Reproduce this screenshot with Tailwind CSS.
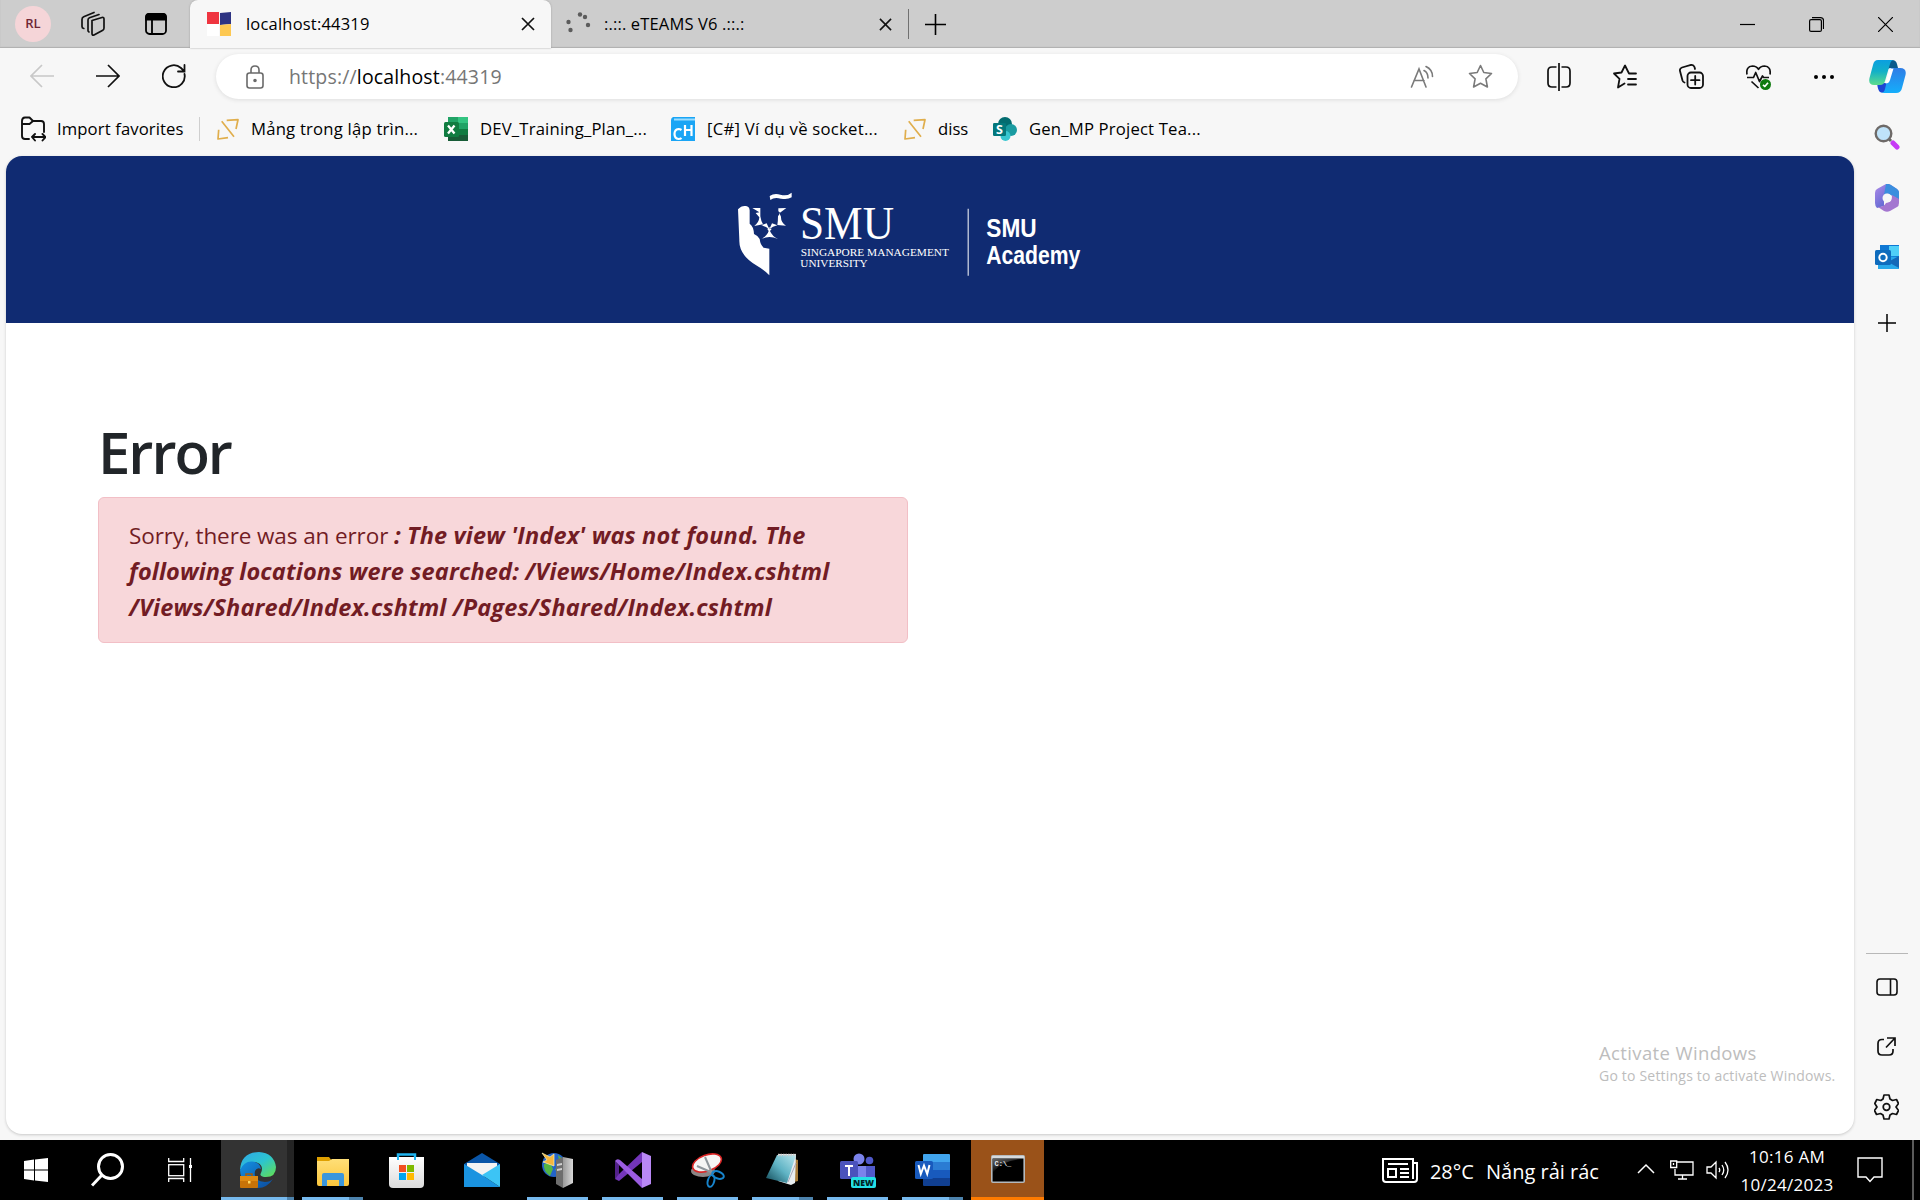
<!DOCTYPE html>
<html lang="en">
<head>
<meta charset="utf-8">
<title>localhost:44319</title>
<script src="https://cdn.jsdelivr.net/npm/@tailwindcss/browser@4"></script>
</head>
<body class="w-[1920px] h-[1200px] overflow-hidden bg-[#f7f7f7] font-['Open_Sans','Noto_Sans',sans-serif] text-black flex flex-col">
<svg class="absolute w-0 h-0">
  <defs>
    <linearGradient id="cpA" x1="0" y1="0" x2="0" y2="1"><stop offset="0" stop-color="#0b9fe0"/><stop offset=".45" stop-color="#12b0c8"/><stop offset="1" stop-color="#5ddc8c"/></linearGradient>
    <linearGradient id="cpB" x1="0" y1="0" x2="0" y2="1"><stop offset="0" stop-color="#2f7de6"/><stop offset="1" stop-color="#14aefb"/></linearGradient>
    <linearGradient id="edgeA" x1="0" y1="0" x2="1" y2="1"><stop offset="0" stop-color="#2fa8e8"/><stop offset=".5" stop-color="#2cc4d0"/><stop offset="1" stop-color="#66e04a"/></linearGradient>
    <linearGradient id="edgeB" x1="0" y1="0" x2="1" y2="1"><stop offset="0" stop-color="#1491e2"/><stop offset="1" stop-color="#0c4a9c"/></linearGradient>
    <linearGradient id="m3" x1="0" y1="0" x2="1" y2="1"><stop offset="0" stop-color="#b08be8"/><stop offset="1" stop-color="#3858c8"/></linearGradient>
    <linearGradient id="note" x1="1" y1="0" x2="0" y2="1"><stop offset="0" stop-color="#b9e6ee"/><stop offset=".5" stop-color="#5fb3c4"/><stop offset="1" stop-color="#0e4654"/></linearGradient>
    <linearGradient id="fold" x1="0" y1="0" x2="0" y2="1"><stop offset="0" stop-color="#ffdf78"/><stop offset="1" stop-color="#fbc63c"/></linearGradient>
    <linearGradient id="bag" x1="0" y1="0" x2="0" y2="1"><stop offset="0" stop-color="#fff"/><stop offset="1" stop-color="#dcdcdc"/></linearGradient>
    <linearGradient id="srv" x1="0" y1="0" x2="1" y2="0"><stop offset="0" stop-color="#9a9a9a"/><stop offset="1" stop-color="#d8d8d8"/></linearGradient>
    <linearGradient id="cmdg" x1="0" y1="0" x2=".6" y2=".8"><stop offset="0" stop-color="#666"/><stop offset=".7" stop-color="#161616"/><stop offset="1" stop-color="#000"/></linearGradient>
  </defs>
</svg>

<!-- Tab strip -->
<header class="h-12 shrink-0 bg-[#cdcdcd] flex items-center shadow-[inset_0_-1px_1px_#b0b0b0]">
  <div class="w-[190px] flex items-center pl-[15px]">
    <div class="size-9 rounded-full bg-[#f5d5d8] text-[#6f2735] text-[13px] font-semibold flex items-center justify-center">RL</div>
    <svg class="ml-[29px] w-[26px] h-[26px]" viewBox="0 0 26 26" fill="none" stroke="#111" stroke-width="1.7" stroke-linejoin="round" stroke-linecap="round"><path d="M12 9.5 22 6.500q2-.5 2 1.500v9q0 1.600-1.200 2.200L14 24q-2 .8-2-1.500zM8 19.500V9q0-1.500 1.500-2.200L19 3.500M3.800 17.500q-1.800-.3-1.800-2V8.500q0-2 1.700-2.700L14 1.500M8 20l1 1"/></svg>
    <svg class="ml-[38px] w-[24px] h-[24px]" viewBox="0 0 24 24" fill="none" stroke="#000" stroke-width="1.800"><rect x="2" y="2" width="20" height="20" rx="3.500"/><path d="M2 5q0-3 3-3h14q3 0 3 3v2.500H2z" fill="#000"/><path d="M8 8v14"/></svg>
  </div>
  <div class="w-[361px] h-12 bg-[#f7f7f7] rounded-t-[8px] flex items-center pl-[17px] shadow-[0_0_2px_#999]">
    <svg class="w-6 h-6" viewBox="0 0 24 24"><path fill="#fff" d="M0 12h12v12H0z"/><path fill="#ef3540" d="M0 0h12v12H0z"/><path fill="#2d3382" d="M13 1l11-1v12l-11 1z"/><path fill="#fdc852" d="M13 13l11-1v12H13z"/></svg>
    <span class="ml-[15px] w-[255px] text-[16.500px] leading-6 tracking-[0.2px] whitespace-nowrap">localhost:44319</span>
    <svg class="ml-[20px] w-[14px] h-[14px]" viewBox="0 0 14 14" stroke="#111" stroke-width="1.700"><path d="M1 1l12 12M13 1L1 13"/></svg>
  </div>
  <div class="w-[357px] h-12 flex items-center pl-[14px]">
    <svg class="w-[26px] h-[26px]" viewBox="0 0 26 26" fill="#5c5c5c"><circle cx="3.500" cy="11" r="2.200"/><circle cx="5.500" cy="19" r="2.200"/><circle cx="15" cy="3.500" r="2.200"/><circle cx="20" cy="6" r="2.200"/><circle cx="23" cy="14" r="2.200"/></svg>
    <span class="ml-[13px] w-[266px] text-[16.500px] leading-6 tracking-[0.15px] whitespace-nowrap">:.::. eTEAMS V6 .::.:</span>
    <svg class="ml-[9px] w-[13px] h-[13px]" viewBox="0 0 14 14" stroke="#111" stroke-width="1.700"><path d="M1 1l12 12M13 1L1 13"/></svg>
  </div>
  <div class="w-px h-[30px] bg-[#707070]"></div>
  <svg class="ml-[16px] w-[21px] h-[21px]" viewBox="0 0 21 21" stroke="#000" stroke-width="1.600"><path d="M0 10.500h21M10.500 0v21"/></svg>
  <div class="ml-auto flex items-center gap-[54px] pr-[27px]">
    <svg class="w-[15px] h-[15px]" viewBox="0 0 15 15" stroke="#000" stroke-width="1.200"><path d="M0 7.500h15"/></svg>
    <svg class="w-[15px] h-[15px]" viewBox="0 0 15 15" fill="none" stroke="#000" stroke-width="1.200"><rect x=".6" y="2.600" width="11.800" height="11.800" rx="1.500"/><path d="M3 .6h8.500q3 0 3 3V12"/></svg>
    <svg class="w-[15px] h-[15px]" viewBox="0 0 15 15" stroke="#000" stroke-width="1.200"><path d="M0 0l15 15M15 0L0 15"/></svg>
  </div>
</header>

<!-- Toolbar -->
<div class="h-[56px] shrink-0 flex items-center pt-px">
  <div class="w-[216px] flex items-center gap-[42px] pl-[30px] pb-px">
    <svg class="w-6 h-6" viewBox="0 0 24 24" fill="none" stroke="#c8c8c8" stroke-width="1.700"><path d="M24 12H1M12 1L1 12l11 11"/></svg>
    <svg class="w-6 h-6" viewBox="0 0 24 24" fill="none" stroke="#111" stroke-width="1.700"><path d="M0 12h23M12 1l11 11-11 11"/></svg>
    <svg class="w-6 h-6 shrink-0" viewBox="0 0 24 24" fill="none" stroke="#111" stroke-width="1.800" stroke-linecap="round"><path d="M22.500 10a11 11 0 1 1-3.500-6L22 7M22.500 1v6.500H16"/></svg>
  </div>
  <div class="w-[1302px] h-[45px] rounded-full bg-white shadow-[0_1px_4px_#ddd] flex items-center pl-[30px] pr-[25px]">
    <svg class="w-[18px] h-[24px]" viewBox="0 0 18 24" fill="none" stroke="#6a6a6a" stroke-width="1.600"><rect x="1" y="8" width="16" height="15" rx="2.500"/><path d="M5 8V5q0-4 4-4t4 4v3"/><circle cx="9" cy="15.500" r="1" fill="#6a6a6a"/></svg>
    <span class="ml-[25px] text-[19.500px] leading-7 tracking-[0.16px] whitespace-nowrap text-[#767676]">https://<span class="text-black">localhost</span>:44319</span>
    <svg class="ml-auto w-[24px] h-[24px]" viewBox="0 0 24 24" fill="none" stroke="#7a7a7a" stroke-width="1.600" stroke-linecap="round"><path d="M1.500 22L9 4l7 18M4 15.500h10M14 5.500q4 2 4 7.500M16 1.500q6.500 3 6.500 10"/></svg>
    <svg class="ml-[34px] w-[25px] h-[25px]" viewBox="0 0 25 25" fill="none" stroke="#7a7a7a" stroke-width="1.600" stroke-linejoin="round"><path d="M12.500 1.500l3.300 7 7.700 1-5.600 5.300 1.500 8.200-6.900-3.800-6.900 3.800 1.500-8.200L1.500 9.500l7.700-1z"/></svg>
  </div>
  <div class="ml-[29px] flex items-center gap-[42px]">
    <svg class="w-[24px] h-[28px]" viewBox="0 0 24 28" fill="none" stroke="#111" stroke-width="1.700"><path d="M9.500 4H5Q1 4 1 8v12q0 4 4 4h4.500M14.500 4H19q4 0 4 4v12q0 4-4 4h-4.500M12 0v28"/></svg>
    <svg class="w-[24px] h-[25px]" viewBox="0 0 24 25" fill="none" stroke="#111" stroke-width="1.800" stroke-linejoin="round" stroke-linecap="round"><path d="M23 9.500h-7L12 1.500l-3.500 7-7.500 1 5.500 5.300L5 23.500l6.500-4M15 15h8M15 20.500h8"/></svg>
    <svg class="w-[25px] h-[25px]" viewBox="0 0 25 25" fill="none" stroke="#111" stroke-width="1.800" stroke-linecap="round"><rect x="8.500" y="8.500" width="15.500" height="15.500" rx="3.500"/><path d="M16.200 12v8.500M12 16.200h8.500M5.500 18.500q-1.500-.5-2-2L1 7q-.6-2.500 2-3.500L12 1q2.500-.5 3.500 2l.5 2"/></svg>
    <svg class="w-[25px] h-[26px]" viewBox="0 0 25 26" fill="none" stroke="#111" stroke-width="1.700" stroke-linejoin="round"><path d="M1 10.500Q-.3 2.500 6.500 2q4 0 6 3.300Q14.500 2 18.500 2 25.200 2.500 24 10.500M1 13.500h6.500l2.200-5 3.800 9 3-5.500 1.200 1.500H23M5.500 17.500l7 6.500"/><circle cx="19.500" cy="20.500" r="5.500" fill="#0f7b0f" stroke="none"/><path stroke="#fff" d="M17 20.800l1.800 1.700 3.200-3.700"/></svg>
    <svg class="w-[22px] h-[6px]" viewBox="0 0 22 6"><circle cx="3" cy="3" r="2"/><circle cx="11" cy="3" r="2"/><circle cx="19" cy="3" r="2"/></svg>
  </div>
  <svg class="ml-[34px] w-[37px] h-[33px]" viewBox="0 0 37 33"><path d="M17 0h6q4 0 5 4l1 4h-7q-4 0-5 4z" fill="#0a5a8c"/><path d="M9 23h11l-4 8q-2 3-5 1-2-1-3-9z" fill="#1c46d4"/><path d="M24 8h7q7 0 5.500 7L33 28q-1 5-6 5H12q3 0 4-4l4-17q1-4 4-4z" fill="url(#cpB)"/><path d="M9 0h16q-3 0-4 4l-5 17q-1 4-5 4H5q-6 0-4.500-7L4 5q1-5 5-5z" fill="url(#cpA)"/><path d="M20 10q1-1.500 4.500-1.500L21 20q-1 3.500-4.500 3.500z" fill="#fff"/></svg>
</div>

<div class="flex-1 flex min-h-0">
  <div class="w-[1854px] flex flex-col pl-[6px]">
    <!-- Favorites bar -->
    <div class="h-[52px] shrink-0 flex items-center pl-[15px] pb-[3px] text-[16.700px] leading-6 tracking-[0.17px] whitespace-nowrap">
      <svg class="w-[25px] h-[26px]" viewBox="0 0 25 26" fill="none" stroke="#111" stroke-width="1.900" stroke-linecap="round" stroke-linejoin="round"><path d="M8 23H4q-3 0-3-3V5q0-3.500 3-3.500h4.500L12 5h8q3 0 3 3v8M1 8h7.500L12 5M11.500 21H24M14 18l-3 3 3 3.500M21.500 18l3 3-3 3.500"/></svg>
      <span class="ml-[11px] w-[142px] tracking-[0.1px]">Import favorites</span>
      <div class="w-px h-6 bg-[#cfcfcf]"></div>
      <svg class="ml-[17px] w-[22px] h-[22px]" viewBox="0 0 22 22" fill="none" stroke="#e0ae4c" stroke-width="1.700" stroke-linejoin="round"><path d="M9.700 2.300L21 1.700l-2 9.300M4.700 3.300L17 18.700M1.700 11.700L1 21l10-1.300"/></svg>
      <span class="ml-[12px] w-[193px] tracking-[0.2px]">Mảng trong lập trìn...</span>
      <svg class="w-[24px] h-[24px]" viewBox="0 0 24 24"><path fill="#21a366" d="M4 0h20v24H4z"/><path fill="#33c481" d="M14 0h10v6H14z"/><path fill="#107c41" d="M4 6h10v6H4zM14 12h10v6H14z"/><path fill="#185c37" d="M4 12h10v6h10v6H4z"/><rect y="5" width="15" height="15" rx="1.500" fill="#107c41"/><path stroke="#fff" stroke-width="2.300" d="M4 8.500l6.500 8M10.500 8.500L4 16.500"/></svg>
      <span class="ml-[12px] w-[191px]">DEV_Training_Plan_...</span>
      <svg class="w-[24px] h-[24px]" viewBox="0 0 24 24"><path fill="#1aa5f5" d="M2 0h22v24H0V3q0-2 2-3z"/><path fill="#9adcff" d="M3 1.500h21v2H3z"/><g fill="none" stroke="#fff" stroke-width="2.200"><path d="M10.500 13q-1.500-1-3-1-4 .5-4 5t4 5q2 0 3-1M14 8v11M20.500 8v11M14 13h6.500"/></g></svg>
      <span class="ml-[12px] w-[197px] tracking-[0.25px]">[C#] Ví dụ về socket...</span>
      <svg class="w-[22px] h-[22px]" viewBox="0 0 22 22" fill="none" stroke="#e0ae4c" stroke-width="1.700" stroke-linejoin="round"><path d="M9.700 2.300L21 1.700l-2 9.300M4.700 3.300L17 18.700M1.700 11.700L1 21l10-1.300"/></svg>
      <span class="ml-[12px] w-[55px] tracking-normal">diss</span>
      <svg class="w-[24px] h-[24px]" viewBox="0 0 24 24"><circle cx="12" cy="7" r="7" fill="#036c70"/><circle cx="18" cy="13" r="6" fill="#1a9ba1"/><circle cx="12.500" cy="19" r="5" fill="#37c6d0"/><rect y="6" width="13" height="13" rx="1.200" fill="#03787c"/><text x="3" y="17" font-size="12.500" font-weight="bold" fill="#fff">S</text></svg>
      <span class="ml-[12px]">Gen_MP Project Tea...</span>
    </div>

    <!-- Page -->
    <main class="relative w-[1848px] h-[978px] bg-white rounded-[16px] overflow-hidden shadow-[0_1px_3px_#c8c8c8]">
      <div class="h-[167px] bg-[#102b72] pl-[714px] pt-[24px]">
        <svg class="w-[380px] h-[110px]" viewBox="0 0 1140 330" fill="#fff">
          <path d="M54 88Q64 76 78 78q10 1 11 13v40q12 8 13 31 12 5 17 15 2 18 12 26l17 3v80q-12-14-36-28-56-32-54-78z"/>
          <path d="M149 48q14-10 32-4 20 6 34-6v14q-12 8-32 4-20-6-32 4z"/>
          <g transform="translate(30 15)"><path d="M67 69L91 69V94Q93 108 99 118L73 123Q87 112 88 97L77 84 88 82zM169 69L145 70V79L151 83 144 94Q144 108 142 120L168 122Q152 112 153 95L148 84 154 80zM94 121L110 115 118 133Q108 124 94 121zM142 121L126 115 118 133Q128 124 142 121zM112 132L118 127 125 132 120 138Q126 153 144 162 118 150 94 162 112 152 116 138z"/></g>
          <g font-family="Liberation Serif,serif"><text x="240" y="178" font-size="141" textLength="282" lengthAdjust="spacingAndGlyphs">SMU</text>
          <g font-size="33"><text x="242" y="227" textLength="445" lengthAdjust="spacingAndGlyphs">SINGAPORE MANAGEMENT</text><text x="241" y="262" textLength="202" lengthAdjust="spacingAndGlyphs">UNIVERSITY</text></g></g>
          <path d="M743 86h3v201h-3z"/>
          <g font-family="Liberation Sans,sans-serif" font-weight="bold" font-size="76"><text x="799" y="171" textLength="151" lengthAdjust="spacingAndGlyphs">SMU</text><text x="799" y="252" textLength="282" lengthAdjust="spacingAndGlyphs">Academy</text></g>
        </svg>
      </div>
      <div class="pl-[92px] pt-[94px]">
        <h1 class="text-[58px] leading-[70px] font-semibold text-[#212529] tracking-[-2px]">Error</h1>
        <div class="mt-[10px] w-[810px] h-[146px] rounded-[6px] border border-[#f2bfc6] bg-[#f8d7da] text-[#721c24] pl-[30px] pt-[20px] text-[22.500px] leading-9 whitespace-nowrap">
          <p><span class="tracking-[-0.1px]">Sorry, there was an error </span><b class="text-[23.500px] leading-8 tracking-[0.16px]"><i>: The view 'Index' was not found. The<br>following locations were searched: /Views/Home/Index.cshtml<br>/Views/Shared/Index.cshtml /Pages/Shared/Index.cshtml</i></b></p>
        </div>
      </div>
      <div class="absolute left-[1593px] top-[883px] whitespace-nowrap text-[#bdbdbd]">
        <p class="text-[18.500px] leading-7 tracking-[0.37px]">Activate Windows</p>
        <p class="text-[14px] leading-[18px] tracking-[0.2px]">Go to Settings to activate Windows.</p>
      </div>
    </main>
  </div>

  <!-- Sidebar -->
  <aside class="flex-1 flex flex-col items-center pt-[20px] pr-px">
    <svg class="w-[26px] h-[26px]" viewBox="0 0 26 26"><path stroke="#c63af5" stroke-width="5" stroke-linecap="round" d="M19 19l4 4"/><path stroke="#666" stroke-width="3" d="M14 14l3 3"/><circle cx="9.500" cy="9.500" r="7.800" fill="#bfe3fa" stroke="#6e6a68" stroke-width="2.400"/></svg>
    <svg class="mt-[34px] w-[26px] h-[28px]" viewBox="0 0 26 28"><path d="M12 0q2-.5 4 .5L23 5q2 1.500 2 3.500v7L17 11q-4-3-7 1v10L3 24q-2-2-2-5V9q0-3 2-4z" fill="url(#m3)"/><path d="M12 0q3-.5 5 1l6 4q2 1.500 2 3.500v7L17 11q-4-3-7 0z" fill="#3b8ede"/><path d="M25 15v4q0 3-2 4l-7 4q-3 1.500-6 0l-6-4q6 0 8-4l5-2q1-3 1-6z" fill="#a476d0"/><circle cx="13" cy="14" r="4.500" fill="#f7f7f7"/></svg>
    <svg class="mt-[33px] w-[24px] h-[25px]" viewBox="0 0 24 25"><path fill="#0f78d4" d="M5 0h19v12H5z"/><path fill="#50d0f8" d="M14 1h10v10H14z"/><path fill="#28a8ea" d="M3 11l21 1v12H3z"/><path fill="#1468b8" d="M24 11v12l-11-6z"/><rect y="5" width="16" height="15" rx="1.500" fill="#0f6cbd"/><circle cx="8" cy="12.500" r="3.700" fill="none" stroke="#fff" stroke-width="2"/></svg>
    <svg class="mt-[44px] w-[18px] h-[18px]" viewBox="0 0 18 18" stroke="#000" stroke-width="1.500"><path d="M0 9h18M9 0v18"/></svg>
    <div class="mt-[621px] w-[42px] h-px bg-[#b8b8b8]"></div>
    <svg class="mt-[24px] w-[22px] h-[18px]" viewBox="0 0 22 18" fill="none" stroke="#111" stroke-width="1.600"><rect x="1" y="1" width="20" height="16" rx="3"/><path d="M14.500 1v16"/></svg>
    <svg class="mt-[41px] w-[19px] h-[19px]" viewBox="0 0 19 19" fill="none" stroke="#111" stroke-width="1.700"><path d="M7 2.500H5Q1 2.500 1 6.500V14q0 4 4 4h7q4 0 4-4v-2M9 10.500L18 1M10 1h8v8"/></svg>
    <svg class="mt-[38px] w-[25px] h-[26px]" viewBox="0 0 25 26" fill="none" stroke="#111" stroke-width="1.700" stroke-linejoin="round"><path d="M10 1h5l1 4 2.500 1.500 4-1 2 4-2.500 3.500 2.500 3.500-2 4-4-1L16 21l-1 4h-5l-1-4-2.500-1.500-4 1-2-4L3 13 .8 9.500l2-4 4 1L9 5z"/><circle cx="12.500" cy="13" r="3.300"/></svg>
  </aside>
</div>

<!-- Taskbar -->
<footer class="h-[60px] shrink-0 bg-black flex text-white">
  <div class="w-[221px] flex items-center pl-[24px]">
    <svg class="w-[24px] h-[28px]" viewBox="0 0 24 28" fill="#fff"><path d="M0 5l10-1.500v10H0zM11 3.400L24 2v11.500H11zM0 14.500h10v10L0 23zM11 14.500h13V26l-13-1.500z"/></svg>
    <svg class="ml-[43px] w-[33px] h-[34px]" viewBox="0 0 33 34" fill="none" stroke="#fff" stroke-width="3"><circle cx="19.500" cy="13.500" r="12"/><path d="M11 22L1 32.500"/></svg>
    <svg class="ml-[44px] w-[24px] h-[24px]" viewBox="0 0 24 24" fill="none" stroke="#fff" stroke-width="1.300"><path d="M.7 0v3.500h15V0M.7 24v-3.500h15V24M22.500 0v24"/><rect x=".7" y="6.700" width="15" height="11"/><path fill="#fff" stroke="none" d="M21 7h3v3h-3z"/></svg>
  </div>
  <div class="w-[73px] flex flex-col items-center bg-linear-to-r from-[#333] from-90% to-[#242424] to-90%">
    <svg class="mt-[12px] w-[36px] h-[36px]" viewBox="0 0 36 36"><path d="M0 18Q1 0 19 0q15 1 17 15 0 11-12 10-5-1-3-4 3-7-3-10Q10 7 0 18z" fill="url(#edgeA)"/><path d="M0 18q4-9 12-8.500Q20 10 21 17q-4-2-6 2-2 10 10 11 5 0 8-3-6 9-15 9Q1 35 0 18z" fill="url(#edgeB)"/><rect y="24" width="18" height="12" rx="1" fill="#c87308"/><path d="M6 24v-2h6v2" stroke="#a55b08" stroke-width="1.500" fill="none"/><path d="M0 24h18v5H0z" fill="#df8a12"/><path fill="#ffd75e" d="M8 29h2.500v2.500H8z"/></svg>
    <div class="mt-auto w-full h-[3px] bg-linear-to-r from-[#76b9ed] from-90% to-[#4d83ad] to-90%"></div>
  </div>
  <div class="ml-[8px] w-[61px] flex flex-col items-center">
    <svg class="mt-[16px] w-[32px] h-[30px]" viewBox="0 0 32 30"><path fill="#dfa000" d="M0 1h12l3 4H0z"/><path fill="url(#fold)" d="M0 5l12 0 3-2h17v25q0 2-2 2H2q-2 0-2-2z"/><path fill="#3a96dd" d="M5 30V19q0-2 2-2h18q2 0 2 2v11h-5v-6H10v6z"/></svg>
    <div class="mt-auto w-full h-[3px] bg-linear-to-r from-[#76b9ed] from-77% to-[#4d83ad] to-77%"></div>
  </div>
  <div class="ml-[13px] w-[61px] flex flex-col items-center">
    <svg class="mt-[13px] w-[35px] h-[35px]" viewBox="0 0 35 35"><path d="M9 6V1.500h17V6" fill="none" stroke="#1fb4f0" stroke-width="2.500"/><path fill="url(#bag)" d="M0 4h35v27q0 4-4 4H4q-4 0-4-4z"/><path d="M9 3v4M26 3v4" stroke="#1fb4f0" stroke-width="2"/><path fill="#f25022" d="M10 12h7v7h-7z"/><path fill="#7fba00" d="M18 12h7v7h-7z"/><path fill="#00a4ef" d="M10 20h7v7h-7z"/><path fill="#ffb900" d="M18 20h7v7h-7z"/></svg>
  </div>
  <div class="ml-[14px] w-[61px] flex flex-col items-center">
    <svg class="mt-[13px] w-[36px] h-[34px]" viewBox="0 0 36 34"><path fill="#0a56a8" d="M0 11L18 0l18 11v6H0z"/><path fill="#f3f3f3" d="M3 10h30v10L18 24 3 18z"/><path fill="#1a93e0" d="M0 11l18 11 18 12H0z"/><path fill="#3cc4f5" d="M36 11L18 22l18 12z"/></svg>
  </div>
  <div class="ml-[15px] w-[61px] flex flex-col items-center">
    <svg class="mt-[12px] w-[34px] h-[36px]" viewBox="0 0 34 36"><circle cx="13" cy="13" r="12" fill="#2464c8"/><path fill="#55b543" d="M3 12q7-2 9 5l-3 7q-7-5-6-12zM17 3l7 6-5 5zM14 17l6-2-3 8z"/><path fill="#f5b63c" stroke="#fff3b0" stroke-width=".7" d="M1 1l8 4 4-3v12L2 10l4-2z"/><path fill="#6e6e6e" d="M15 8l7-3v31l-7-4z"/><path fill="url(#srv)" d="M22 5l10 2v24l-10 5z"/><path fill="#d0d0d0" d="M16 12l5-1v2l-5 1zM16 17l5-1v2l-5 1z"/></svg>
    <div class="mt-auto w-full h-[3px] bg-[#76b9ed]"></div>
  </div>
  <div class="ml-[14px] w-[61px] flex flex-col items-center">
    <svg class="mt-[12px] w-[36px] h-[36px]" viewBox="0 0 36 36"><path fill="#52218a" d="M0 9l4 4v11l-4 3z"/><path fill="#7335ba" d="M0 27l4 2L27 10V0L4 22z"/><path fill="#9a5ce0" d="M0 9q2-3 5-1l22 19v9z"/><path fill="#b988f5" d="M27 0l9 4v28l-9 4z"/></svg>
    <div class="mt-auto w-full h-[3px] bg-[#76b9ed]"></div>
  </div>
  <div class="ml-[14px] w-[61px] flex flex-col items-center">
    <svg class="mt-[13px] w-[34px] h-[35px]" viewBox="0 0 34 35"><ellipse cx="12" cy="18" rx="12" ry="6" fill="#8c8585"/><ellipse cx="16" cy="10" rx="15" ry="8" transform="rotate(-20 16 10)" fill="#f5f5f5" stroke="#d92525" stroke-width="1.600"/><path d="M14 4l7 16M6 13l16 7" stroke="#8f969c" stroke-width="2"/><g fill="none" stroke="#1784cc" stroke-width="2"><ellipse cx="27" cy="22" rx="6" ry="3.500" transform="rotate(20 27 22)"/><ellipse cx="20" cy="28" rx="3.200" ry="6" transform="rotate(15 20 28)"/></g></svg>
    <div class="mt-auto w-full h-[3px] bg-[#76b9ed]"></div>
  </div>
  <div class="ml-[14px] w-[61px] flex flex-col items-center">
    <svg class="mt-[13px] w-[33px] h-[33px]" viewBox="0 0 33 33"><path fill="#a87d3a" d="M24 5l8 2v21l-8 2z"/><path fill="#e9eef0" d="M12 1h18l-1 29-4 2-13-4z"/><path fill="url(#note)" d="M11 2h19l-9 28L0 25z"/><path d="M12 2h18" stroke="#ccc" stroke-width="2.500" stroke-dasharray="1.500 1"/><path stroke="#aab" d="M30 10l-8 19"/></svg>
    <div class="mt-auto w-full h-[3px] bg-linear-to-r from-[#76b9ed] from-77% to-[#4d83ad] to-77%"></div>
  </div>
  <div class="ml-[14px] w-[61px] flex flex-col items-center">
    <svg class="mt-[13px] w-[36px] h-[35px]" viewBox="0 0 36 35"><circle cx="19" cy="6" r="5.500" fill="#7b83eb"/><circle cx="29.500" cy="7.500" r="3.800" fill="#5059c9"/><path fill="#5059c9" d="M25 13h10v12H25z"/><path fill="#7b83eb" d="M12 13h14v13H12z"/><rect y="8" width="18" height="18" rx="1.500" fill="#4b53bc"/><path fill="#fff" d="M5 12h8v2h-3v9H8v-9H5z"/><rect x="11" y="24" width="25" height="11" rx="2" fill="#23e0e6"/><text x="13" y="33" font-size="9.500" font-weight="800" fill="#022" textLength="21" lengthAdjust="spacingAndGlyphs">NEW</text></svg>
    <div class="mt-auto w-full h-[3px] bg-[#76b9ed]"></div>
  </div>
  <div class="ml-[14px] w-[61px] flex flex-col items-center">
    <svg class="mt-[14px] w-[35px] h-[32px]" viewBox="0 0 35 32"><path fill="#41a5ee" d="M8 1q0-1 1-1h25q1 0 1 1v7H8z"/><path fill="#2b7cd3" d="M8 8h27v8H8z"/><path fill="#185abd" d="M8 16h27v8H8z"/><path fill="#103f91" d="M8 24h27v7q0 1-1 1H9q-1 0-1-1z"/><rect y="7" width="18" height="18" rx="1.500" fill="#185abd"/><path d="M3.500 11l2.300 9L9 11.500 12.200 20l2.300-9" fill="none" stroke="#fff" stroke-width="2"/></svg>
    <div class="mt-auto w-full h-[3px] bg-linear-to-r from-[#76b9ed] from-77% to-[#4d83ad] to-77%"></div>
  </div>
  <div class="ml-[8px] w-[73px] flex flex-col items-center bg-[#9a5219]">
    <svg class="mt-[15px] w-[34px] h-[28px]" viewBox="0 0 34 28"><rect x=".8" y=".8" width="32.400" height="26.400" rx="1" fill="#000" stroke="#b5babd" stroke-width="1.600"/><path fill="#d6dadc" d="M1 1h32v2.500H1z"/><path fill="url(#cmdg)" d="M2 4h30q-20 1-30 13z"/><text x="3.500" y="11" font-size="7" fill="#eee" font-family="Liberation Mono,monospace" font-weight="bold">C:\_</text></svg>
    <div class="mt-auto w-full h-[3px] bg-[#ff7b00]"></div>
  </div>
  <div class="ml-auto w-[558px] flex items-center whitespace-nowrap">
    <svg class="ml-[20px] w-[36px] h-[25px]" viewBox="0 0 36 25" fill="none" stroke="#fff" stroke-width="2"><path d="M31 5h4v16q0 3-3 3H4q-3 0-3-3V1h30v20M6 6h20M18 11h9M18 15h9M18 19h9"/><path d="M6 11h8v8H6z"/></svg>
    <span class="ml-[12px] w-[56px] pt-[3px] text-[20px] tracking-[-0.1px]">28°C</span>
    <span class="w-[151px] pt-[3px] text-[20px]">Nắng rải rác</span>
    <svg class="w-[18px] h-[14px]" viewBox="0 0 18 14" fill="none" stroke="#fff" stroke-width="1.500"><path d="M1 10l8-8 8 8"/></svg>
    <svg class="ml-[15px] w-[24px] h-[20px]" viewBox="0 0 24 20" fill="none" stroke="#fff" stroke-width="1.300"><path d="M6 2h17v13H5V9M8 19h9M12.500 15v4M.7 1h6v6.500h-6zM3.500 3v2"/></svg>
    <svg class="ml-[12px] w-[24px] h-[20px]" viewBox="0 0 24 20" fill="none" stroke="#fff" stroke-width="1.300"><path d="M1 7h4l5-5v16l-5-5H1zM13 8q1.500 2 0 4M16 5q3.500 5 0 10M19 2q6 8 0 16"/></svg>
    <div class="ml-[9px] w-[96px] pt-px text-center text-[17px] leading-[28px] tracking-[0.3px]"><p>10:16 AM</p><p>10/24/2023</p></div>
    <svg class="ml-[22px] w-[26px] h-[26px]" viewBox="0 0 26 26" fill="none" stroke="#fff" stroke-width="1.400"><path d="M1 1h24v19h-8l-4 4.500L9 20H1z"/></svg>
    <div class="ml-auto mr-[6px] w-[2px] h-full bg-[#5a5a5a]"></div>
  </div>
</footer>
</body>
</html>
